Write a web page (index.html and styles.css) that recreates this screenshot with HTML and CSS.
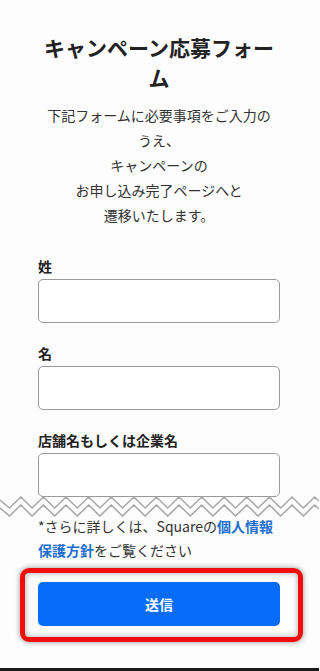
FILE: index.html
```html
<!DOCTYPE html>
<html lang="ja">
<head>
<meta charset="utf-8">
<title>キャンペーン応募フォーム</title>
<link rel="stylesheet" href="styles.css">
</head>
<body>
<main class="page">
  <h1 class="title">キャンペーン応募フォーム</h1>
  <p class="lead">下記フォームに必要事項をご入力のうえ、<br>キャンペーンの<br>お申し込み完了ページへと<br>遷移いたします。</p>
  <form class="form">
    <label class="field">
      <span class="label">姓</span>
      <input class="input" type="text">
    </label>
    <label class="field">
      <span class="label">名</span>
      <input class="input" type="text">
    </label>
    <div class="field torn">
      <span class="label">店舗名もしくは企業名</span>
      <input class="input" type="text">
      <svg class="tear" width="319" height="24" viewBox="0 0 319 24" aria-hidden="true">
        <polygon fill="#fdfdfd" points="0,7 9.5,15 20.8,4 32.1,15 43.4,4 54.7,15 66,4 77.3,15 88.6,4 99.9,15 111.2,4 122.5,15 133.8,4 145.1,15 156.4,4 167.7,15 179,4 190.3,15 201.6,4 212.9,15 224.2,4 235.5,15 246.8,4 258.1,15 269.4,4 280.7,15 292,4 303.3,15 314.6,4 319,8 319,16 314.6,12 303.3,23 292,12 280.7,23 269.4,12 258.1,23 246.8,12 235.5,23 224.2,12 212.9,23 201.6,12 190.3,23 179,12 167.7,23 156.4,12 145.1,23 133.8,12 122.5,23 111.2,12 99.9,23 88.6,12 77.3,23 66,12 54.7,23 43.4,12 32.1,23 20.8,12 9.5,23 0,15"/>
        <polyline fill="none" stroke="#a9a9a9" stroke-width="1.6" points="0,7 9.5,15 20.8,4 32.1,15 43.4,4 54.7,15 66,4 77.3,15 88.6,4 99.9,15 111.2,4 122.5,15 133.8,4 145.1,15 156.4,4 167.7,15 179,4 190.3,15 201.6,4 212.9,15 224.2,4 235.5,15 246.8,4 258.1,15 269.4,4 280.7,15 292,4 303.3,15 314.6,4 319,8"/>
        <polyline fill="none" stroke="#a9a9a9" stroke-width="1.6" points="0,15 9.5,23 20.8,12 32.1,23 43.4,12 54.7,23 66,12 77.3,23 88.6,12 99.9,23 111.2,12 122.5,23 133.8,12 145.1,23 156.4,12 167.7,23 179,12 190.3,23 201.6,12 212.9,23 224.2,12 235.5,23 246.8,12 258.1,23 269.4,12 280.7,23 292,12 303.3,23 314.6,12 319,16"/>
      </svg>
    </div>
    <p class="note">*さらに詳しくは、Squareの<a class="link" href="#">個人情報保護方針</a>をご覧ください</p>
    <div class="highlight">
      <button class="submit" type="button">送信</button>
    </div>
  </form>
</main>
<div class="bottom-edge"></div>
</body>
</html>
```

FILE: styles.css
```css
html, body {
  margin: 0;
  padding: 0;
}
body {
  background: #fdfdfd;
  color: #333;
  font-family: "Noto Sans CJK JP", "Noto Sans", sans-serif;
  width: 319px;
  height: 671px;
  overflow: hidden;
  display: flex;
  flex-direction: column;
}
.page {
  flex: 1;
  padding: 0 39px 0 38px;
}
.title {
  margin: 32px 0 0;
  font-size: 21px;
  line-height: 30px;
  font-weight: 700;
  color: #222;
  text-align: center;
  letter-spacing: 0;
}
.lead {
  width: 232px;
  margin: 11px auto 0;
  font-size: 14px;
  line-height: 25px;
  text-align: center;
  color: #333;
}
.form {
  margin-top: 28px;
  display: flex;
  flex-direction: column;
}
.field {
  display: flex;
  flex-direction: column;
  margin-bottom: 20px;
}
.label {
  font-size: 14px;
  line-height: 20px;
  font-weight: 700;
  color: #222;
  margin-bottom: 3px;
}
.input {
  box-sizing: border-box;
  width: 242px;
  height: 44px;
  margin: 0;
  border: 1px solid #9a9a9a;
  border-radius: 5px;
  background: #fff;
  font: inherit;
}
.torn {
  position: relative;
  margin-bottom: 0;
}
.tear {
  position: absolute;
  left: -38px;
  top: 63px;
  display: block;
}
.note {
  margin: 17px 0 0;
  font-size: 14px;
  line-height: 24px;
  color: #333;
}
.link {
  color: #1e6fd2;
  font-weight: 700;
  text-decoration: none;
}
.highlight {
  margin: 6px -23px 0 -18px;
  padding: 9px 18px 11px 13px;
  border: 5px solid #f20d0d;
  border-radius: 9px;
  box-shadow: 0 0 5px 1px rgba(0, 0, 0, 0.3), inset 0 0 5px 1px rgba(0, 0, 0, 0.25);
  display: flex;
}
.submit {
  width: 242px;
  height: 44px;
  border: 0;
  border-radius: 5px;
  background: #076cf7;
  color: #fff;
  font-family: inherit;
  font-size: 14px;
  font-weight: 700;
  padding: 0;
}
.bottom-edge {
  height: 3px;
  background: #1a1a1a;
}
```
